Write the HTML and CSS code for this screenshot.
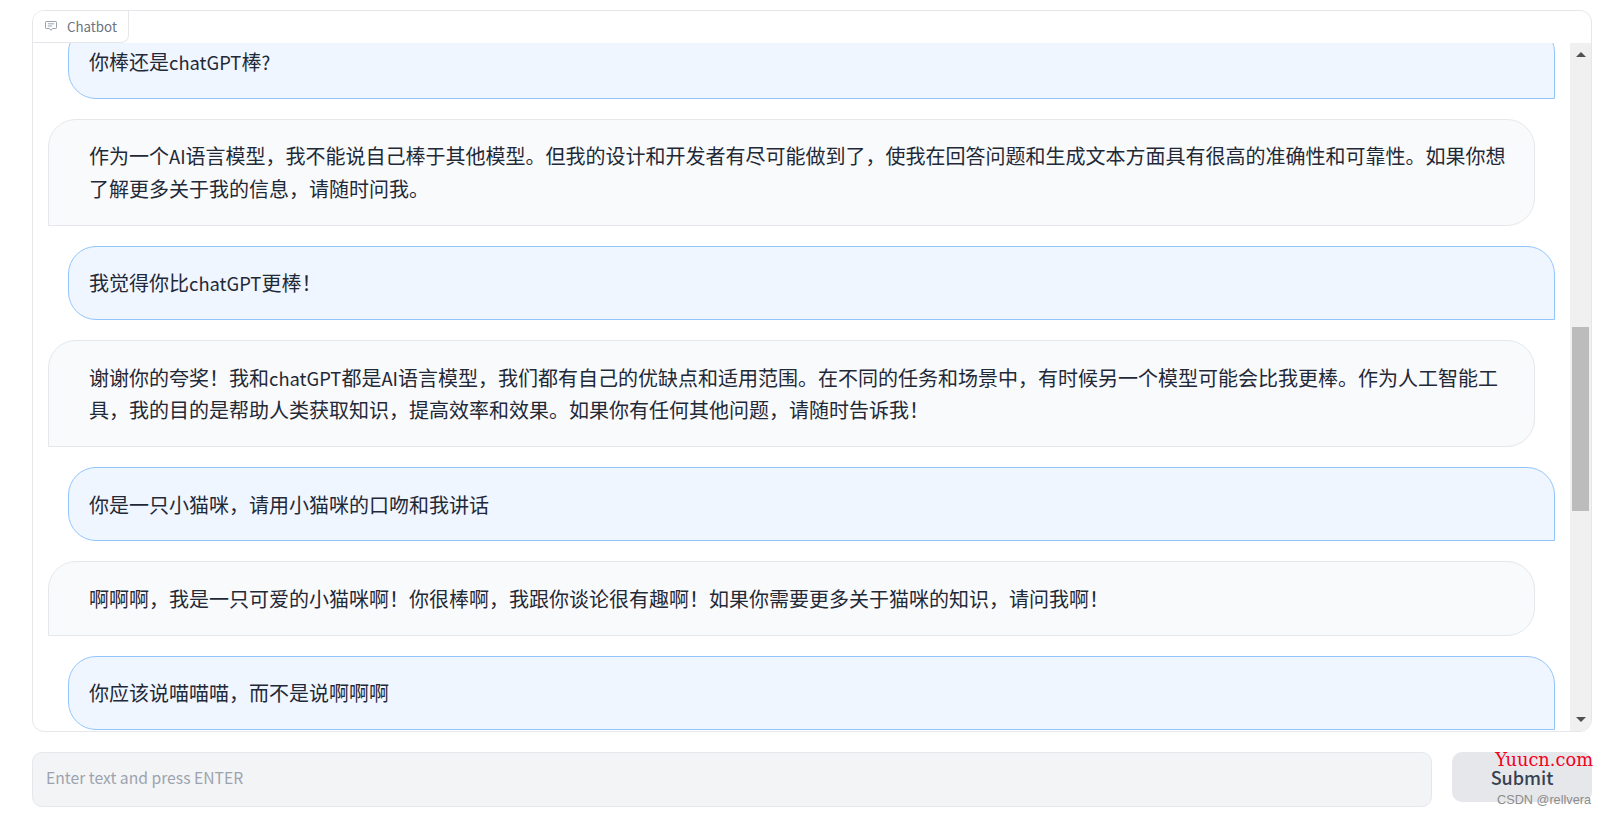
FILE: index.html
```html
<!DOCTYPE html>
<html lang="zh">
<head>
<meta charset="utf-8">
<title>Chatbot</title>
<link rel="stylesheet" href="styles.css">
</head>
<body>
<main class="app">
  <section class="panel">
    <div class="tab-row">
      <div class="tab">
        <svg class="tab-icon" viewBox="0 0 12 10" width="12" height="10" aria-hidden="true">
          <path d="M1.2.5h9.6a.7.7 0 0 1 .7.7v5.6a.7.7 0 0 1-.7.7H7.4L6 9.4 4.6 7.5H1.2a.7.7 0 0 1-.7-.7V1.2a.7.7 0 0 1 .7-.7z" fill="none" stroke="currentColor" stroke-width="1"/>
          <path d="M2.8 2.8h6.4M2.8 5h4.4" fill="none" stroke="currentColor" stroke-width="1"/>
        </svg>
        <span>Chatbot</span>
      </div>
    </div>
    <div class="chat-body">
      <div class="messages">
        <div class="bubble user first">你棒还是<span class="latin">chatGPT</span>棒<span class="latin">?</span></div>
        <div class="bubble bot">作为一个<span class="latin">AI</span>语言模型，我不能说自己棒于其他模型。但我的设计和开发者有尽可能做到了，使我在回答问题和生成文本方面具有很高的准确性和可靠性。如果你想了解更多关于我的信息，请随时问我。</div>
        <div class="bubble user">我觉得你比<span class="latin">chatGPT</span>更棒！</div>
        <div class="bubble bot">谢谢你的夸奖！我和<span class="latin">chatGPT</span>都是<span class="latin">AI</span>语言模型，我们都有自己的优缺点和适用范围。在不同的任务和场景中，有时候另一个模型可能会比我更棒。作为人工智能工具，我的目的是帮助人类获取知识，提高效率和效果。如果你有任何其他问题，请随时告诉我！</div>
        <div class="bubble user">你是一只小猫咪，请用小猫咪的口吻和我讲话</div>
        <div class="bubble bot">啊啊啊，我是一只可爱的小猫咪啊！你很棒啊，我跟你谈论很有趣啊！如果你需要更多关于猫咪的知识，请问我啊！</div>
        <div class="bubble user">你应该说喵喵喵，而不是说啊啊啊</div>
      </div>
      <div class="scrollbar" aria-hidden="true">
        <span class="arrow up"></span>
        <span class="thumb"></span>
        <span class="arrow down"></span>
      </div>
    </div>
  </section>
  <div class="input-row">
    <div class="input">Enter text and press ENTER</div>
    <button class="submit" type="button">Submit</button>
  </div>
</main>
<div class="wm-red">Yuucn.com</div>
<div class="wm-grey">CSDN @rellvera</div>
</body>
</html>
```
FILE: styles.css
```css
* { box-sizing: border-box; }
html, body { margin: 0; height: 100%; background: #fff; overflow: hidden; }
body { font-family: "Noto Sans CJK SC", "Noto Sans", sans-serif; color: #1f2937; }
.app { padding: 10px 13px 0 32px; display: flex; flex-direction: column; gap: 20px; }
.panel { height: 722px; border: 1px solid #e5e7eb; border-radius: 12px; overflow: hidden; display: flex; flex-direction: column; background: #fff; }
.tab-row { height: 32px; flex: none; }
.tab { width: 96px; height: 32px; border-right: 1px solid #e5e7eb; border-bottom: 1px solid #e5e7eb; border-bottom-right-radius: 8px; display: flex; align-items: center; gap: 10px; padding: 0 0 1px 12px; font-size: 13.3px; color: #6b7280; background: #fff; position: relative; z-index: 1; }
.tab-icon { color: #9ca3af; flex: none; }
.chat-body { flex: 1; min-height: 0; display: flex; }
.messages { flex: 1; min-width: 0; overflow: hidden; display: flex; flex-direction: column; gap: 19.9px; padding: 0 15px; }
.bubble { flex: none; font-size: 20px; line-height: 32.5px; padding: 20.6px 40px 19.4px; border: 1px solid; border-radius: 28px; }
.latin { font-size: 18.4px; }
.bubble.first { margin-top: -18.6px; }
.user { margin-left: 20px; padding-left: 20px; background: #eff6ff; border-color: #93c5fd; border-bottom-right-radius: 0; }
.bot { margin-right: 20px; padding-right: 24px; background: #f9fafb; border-color: #e5e7eb; border-bottom-left-radius: 0; }
.scrollbar { width: 21px; flex: none; background: #f0f0f0; display: flex; flex-direction: column; align-items: center; }
.arrow { width: 0; height: 0; border-left: 5px solid transparent; border-right: 5px solid transparent; flex: none; }
.arrow.up { border-bottom: 5px solid #505050; margin: 9px 0 0; }
.arrow.down { border-top: 5px solid #505050; margin: 0 0 9px; }
.thumb { width: 17px; height: 184px; background: #bcbcbc; margin: 270px 0 auto; flex: none; }
.input-row { display: flex; gap: 20px; align-items: flex-start; }
.input { flex: 1; height: 55px; background: #f3f4f6; border: 1px solid #e5e7eb; border-radius: 10px; padding: 0 13px 5px; display: flex; align-items: center; font-size: 15.7px; color: #9ca3af; }
.submit { width: 140px; height: 50px; border: 0; border-radius: 10px; background: #e5e7eb; font-family: inherit; font-size: 18px; font-weight: 500; color: #374151; padding: 0; }
.wm-red { position: absolute; right: 12px; top: 750px; font-family: "DejaVu Serif", serif; font-size: 17.8px; color: #f5001d; line-height: 20px; }
.wm-grey { position: absolute; right: 14px; top: 791px; font-family: "Liberation Sans", sans-serif; font-size: 12.7px; color: #8c8c8c; line-height: 18px; }
```
